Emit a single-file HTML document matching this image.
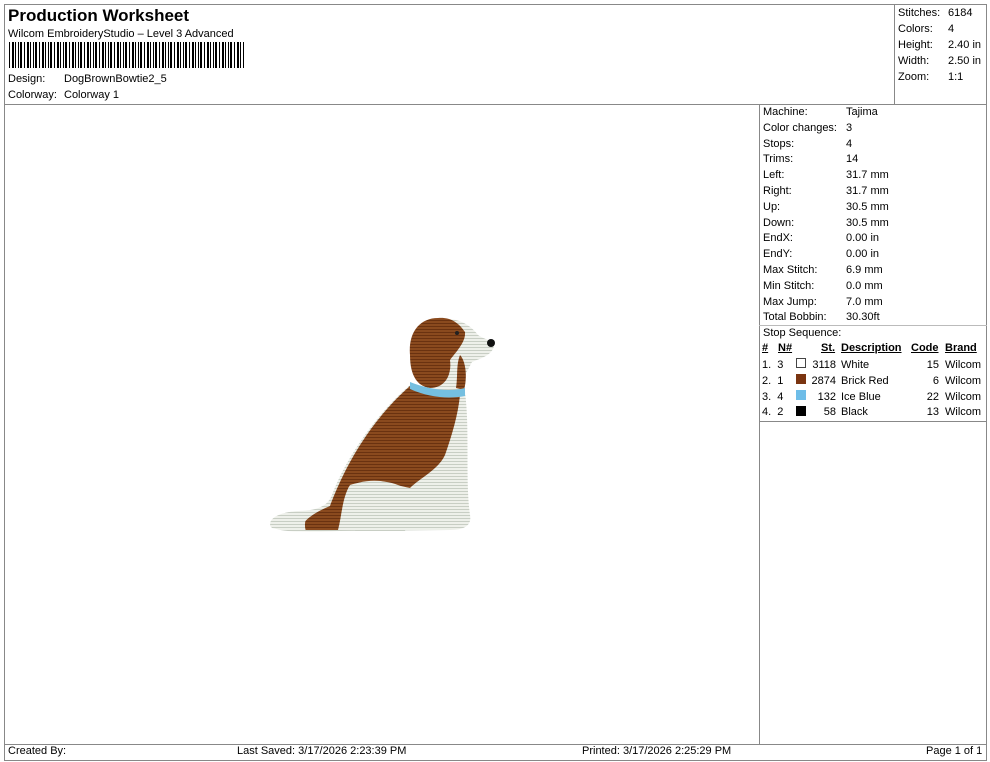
<!DOCTYPE html>
<html><head><meta charset="utf-8"><style>
*{margin:0;padding:0;box-sizing:border-box}
body{width:990px;height:762px;background:#fff;font-family:"Liberation Sans",Arial,sans-serif;font-size:11px;color:#000;position:relative;overflow:hidden}
.a{position:absolute;white-space:nowrap}
.l{position:absolute;background:#888}
</style></head><body>
<div class="l" style="left:4px;top:4px;width:983px;height:1px"></div>
<div class="l" style="left:4px;top:4px;width:1px;height:757px"></div>
<div class="l" style="left:986px;top:4px;width:1px;height:757px"></div>
<div class="l" style="left:4px;top:104px;width:983px;height:1px"></div>
<div class="l" style="left:894px;top:4px;width:1px;height:100px"></div>
<div class="l" style="left:759px;top:104px;width:1px;height:640px"></div>
<div class="l" style="left:4px;top:744px;width:983px;height:1px"></div>
<div class="l" style="left:4px;top:760px;width:983px;height:1px"></div>
<div class="l" style="left:759px;top:325px;width:228px;height:1px;background:#bbb"></div>
<div class="l" style="left:759px;top:421px;width:228px;height:1px"></div>

<div class="a" style="left:8px;top:6px;font-size:17px;font-weight:bold">Production Worksheet</div>
<div class="a" style="left:8px;top:28px">Wilcom EmbroideryStudio – Level 3 Advanced</div>
<div class="a" style="left:9px;top:42px;width:235px;height:26px;background:repeating-linear-gradient(90deg,#000 0 1px,#fff 1px 3px,#000 3px 5px,#fff 5px 6px,#000 6px 7px,#fff 7px 9px,#000 9px 10px,#fff 10px 11px,#000 11px 13px,#fff 13px 15px)"></div>
<div class="a" style="left:8px;top:73px">Design:</div>
<div class="a" style="left:64px;top:73px">DogBrownBowtie2_5</div>
<div class="a" style="left:8px;top:89px">Colorway:</div>
<div class="a" style="left:64px;top:89px">Colorway 1</div>

<div class="a" style="left:898px;top:5px;line-height:16px">Stitches:<br>Colors:<br>Height:<br>Width:<br>Zoom:</div>
<div class="a" style="left:948px;top:5px;line-height:16px">6184<br>4<br>2.40 in<br>2.50 in<br>1:1</div>

<div class="a" style="left:763px;top:105px;line-height:15.8px">Machine:<br>Color changes:<br>Stops:<br>Trims:<br>Left:<br>Right:<br>Up:<br>Down:<br>EndX:<br>EndY:<br>Max Stitch:<br>Min Stitch:<br>Max Jump:<br>Total Bobbin:<br>Stop Sequence:</div>
<div class="a" style="left:846px;top:105px;line-height:15.8px">Tajima<br>3<br>4<br>14<br>31.7 mm<br>31.7 mm<br>30.5 mm<br>30.5 mm<br>0.00 in<br>0.00 in<br>6.9 mm<br>0.0 mm<br>7.0 mm<br>30.30ft</div>

<div class="a" style="left:762px;top:342px;font-weight:bold;text-decoration:underline">#</div>
<div class="a" style="left:778px;top:342px;font-weight:bold;text-decoration:underline">N#</div>
<div class="a" style="left:821px;top:342px;font-weight:bold;text-decoration:underline">St.</div>
<div class="a" style="left:841px;top:342px;font-weight:bold;text-decoration:underline">Description</div>
<div class="a" style="left:911px;top:342px;font-weight:bold;text-decoration:underline">Code</div>
<div class="a" style="left:945px;top:342px;font-weight:bold;text-decoration:underline">Brand</div>

<div class="a" style="left:762px;top:358px;line-height:15.8px">1.&nbsp;&nbsp;3<br>2.&nbsp;&nbsp;1<br>3.&nbsp;&nbsp;4<br>4.&nbsp;&nbsp;2</div>
<div class="a" style="left:796px;top:358px;width:10px;height:10px;border:1px solid #444;background:#fff"></div>
<div class="a" style="left:796px;top:374px;width:10px;height:10px;background:#7a3410"></div>
<div class="a" style="left:796px;top:390px;width:10px;height:10px;background:#6ebde8"></div>
<div class="a" style="left:796px;top:406px;width:10px;height:10px;background:#000"></div>
<div class="a" style="left:806px;top:358px;width:30px;text-align:right;line-height:15.8px">3118<br>2874<br>132<br>58</div>
<div class="a" style="left:841px;top:358px;line-height:15.8px">White<br>Brick Red<br>Ice Blue<br>Black</div>
<div class="a" style="left:900px;top:358px;width:39px;text-align:right;line-height:15.8px">15<br>6<br>22<br>13</div>
<div class="a" style="left:945px;top:358px;line-height:15.8px">Wilcom<br>Wilcom<br>Wilcom<br>Wilcom</div>

<svg class="a" style="left:260px;top:300px" width="250" height="240" viewBox="0 0 250 240">
<defs><pattern id="st" width="4" height="3" patternUnits="userSpaceOnUse"><rect width="4" height="3" fill="#8a4a1e"/><rect y="2" width="4" height="1" fill="#6a3210"/></pattern>
<pattern id="wt" width="4" height="3" patternUnits="userSpaceOnUse"><rect width="4" height="3" fill="#eef0ea"/><rect y="2" width="4" height="1" fill="#c8cec4"/></pattern></defs>
<!-- white base body -->
<path d="M150 85 L205 92 C210 130 205 180 210 215 C212 225 205 230 190 230 L80 231 C55 232 30 232 12 228 C6 222 14 212 40 211 C60 210 68 205 72 195 C85 160 115 115 150 85Z" fill="url(#wt)"/>
<!-- brown back -->
<path d="M150 86 L200 95 C198 115 192 135 185 155 C178 170 160 178 150 188 C135 185 110 178 90 185 C82 198 82 215 78 230 L42 230 C40 222 55 212 70 206 C78 185 100 130 150 86Z" fill="url(#st)"/>
<!-- white haunch patch -->
<path d="M88 188 C100 178 130 178 148 190 C152 205 150 220 145 231 L95 231 C100 222 95 210 88 205Z" fill="url(#wt)"/>
<!-- white tail tip -->
<path d="M10 226 C12 214 30 210 48 211 C45 220 44 226 46 231 C30 232 18 231 10 226Z" fill="url(#wt)"/>
<!-- head -->
<path d="M170 25 C185 15 205 18 218 35 C225 40 233 40 234 46 C232 55 222 58 212 62 C205 75 200 85 200 92 L165 88Z" fill="url(#wt)"/>
<!-- ear/head brown -->
<path d="M178 18 C160 18 148 32 150 55 C150 72 155 86 170 88 C185 88 192 75 190 60 C196 52 206 42 205 32 C198 22 190 17 178 18Z" fill="url(#st)"/>
<path d="M200 55 C205 60 208 75 204 90 L196 88 C198 75 196 65 200 55Z" fill="url(#st)"/>
<path d="M150 82 C170 90 190 92 205 88 L205 96 C190 99 170 98 150 89Z" fill="#75bfe0"/>
<circle cx="231" cy="43" r="4" fill="#111"/>
<circle cx="197" cy="33" r="2" fill="#222"/>
</svg>

<div class="a" style="left:8px;top:745px">Created By:</div>
<div class="a" style="left:237px;top:745px">Last Saved: 3/17/2026 2:23:39 PM</div>
<div class="a" style="left:582px;top:745px">Printed: 3/17/2026 2:25:29 PM</div>
<div class="a" style="left:926px;top:745px">Page 1 of 1</div>
</body></html>
